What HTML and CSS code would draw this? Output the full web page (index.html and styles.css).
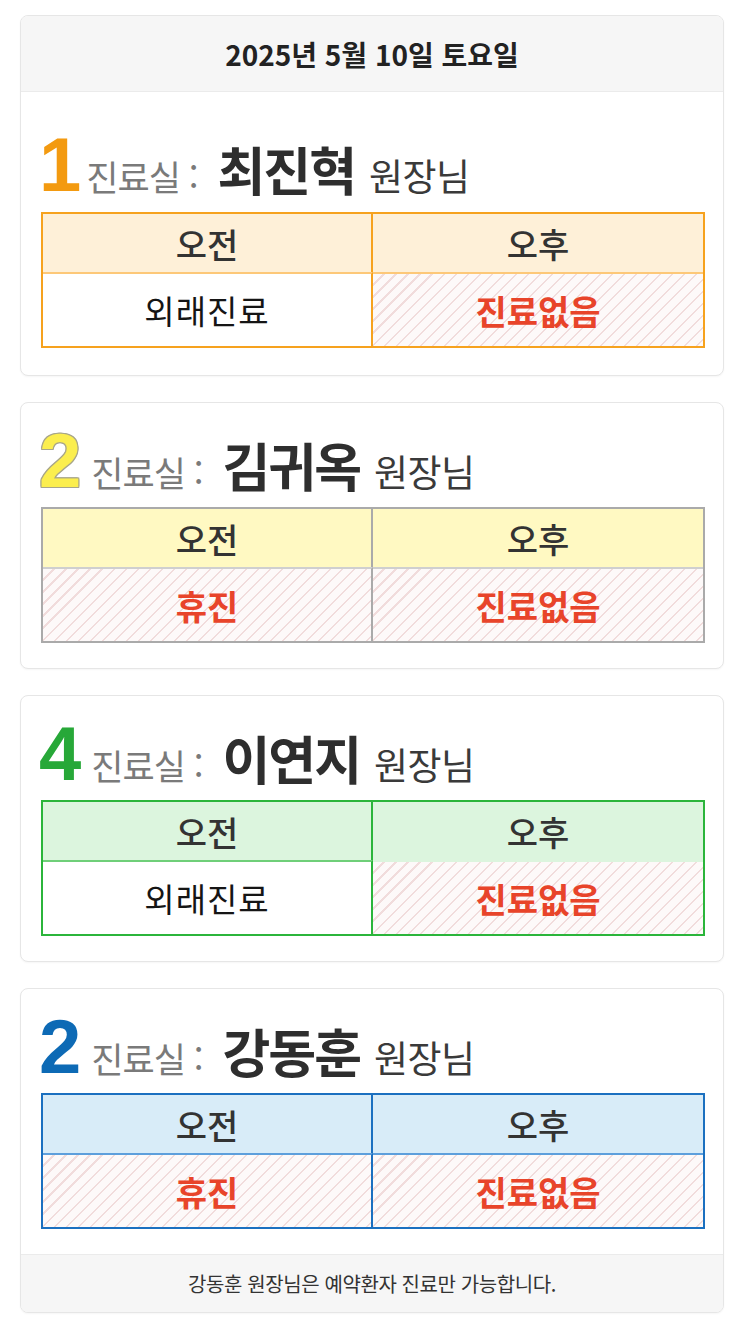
FILE: index.html
```html
<!DOCTYPE html>
<html lang="ko">
<head>
<meta charset="utf-8">
<title>진료 일정</title>
<link rel="stylesheet" href="styles.css">
</head>
<body>
<main class="page">
  <section class="card card--first">
    <header class="card-head">2025년 5월 10일 토요일</header>
    <div class="title title--first">
      <span class="num num--orange">1</span>
      <span class="room">진료실 :</span>
      <span class="name">최진혁</span>
      <span class="rank">원장님</span>
    </div>
    <div class="sched sched--orange">
      <div class="th th--left">오전</div>
      <div class="th">오후</div>
      <div class="td td--left">외래진료</div>
      <div class="td td--off">진료없음</div>
    </div>
  </section>

  <section class="card">
    <div class="title">
      <span class="num num--yellow">2</span>
      <span class="room">진료실 :</span>
      <span class="name">김귀옥</span>
      <span class="rank">원장님</span>
    </div>
    <div class="sched sched--gray">
      <div class="th th--left">오전</div>
      <div class="th">오후</div>
      <div class="td td--left td--off">휴진</div>
      <div class="td td--off">진료없음</div>
    </div>
  </section>

  <section class="card">
    <div class="title">
      <span class="num num--green">4</span>
      <span class="room">진료실 :</span>
      <span class="name">이연지</span>
      <span class="rank">원장님</span>
    </div>
    <div class="sched sched--green">
      <div class="th th--left">오전</div>
      <div class="th">오후</div>
      <div class="td td--left">외래진료</div>
      <div class="td td--off td--noline">진료없음</div>
    </div>
  </section>

  <section class="card">
    <div class="title">
      <span class="num num--blue">2</span>
      <span class="room">진료실 :</span>
      <span class="name">강동훈</span>
      <span class="rank">원장님</span>
    </div>
    <div class="sched sched--blue">
      <div class="th th--left">오전</div>
      <div class="th">오후</div>
      <div class="td td--left td--off">휴진</div>
      <div class="td td--off">진료없음</div>
    </div>
    <footer class="card-foot">강동훈 원장님은 예약환자 진료만 가능합니다.</footer>
  </section>
</main>
</body>
</html>
```

FILE: styles.css
```css
* { box-sizing: border-box; }

body {
  margin: 0;
  background: #ffffff;
  font-family: "Noto Sans CJK KR", "Noto Sans", sans-serif;
  color: #333;
}

.page {
  padding: 15px 20px 8px;
  display: flex;
  flex-direction: column;
  gap: 26px;
}

.card {
  border: 1px solid #e6e6e6;
  border-radius: 8px;
  background: #fff;
  box-shadow: 0 1px 2px rgba(0, 0, 0, 0.04);
  padding-bottom: 25px;
  overflow: hidden;
}

.card--first { padding-bottom: 27px; }

.card-head {
  height: 76px;
  background: #f6f6f6;
  border-bottom: 1px solid #ebebeb;
  display: flex;
  align-items: center;
  justify-content: center;
  font-size: 28px;
  font-weight: 700;
  color: #222;
  letter-spacing: 0;
}

.title {
  display: flex;
  align-items: baseline;
  padding: 20px 20px 0 18px;
  margin-bottom: 8px;
  line-height: 1;
}

.title--first { padding-top: 35px; margin-bottom: 9px; }

.num {
  font-family: "Liberation Sans", Arial, sans-serif;
  font-weight: 700;
  font-size: 76px;
  line-height: 1;
  margin-right: 12px;
  letter-spacing: -2px;
}

.num--orange { color: #f39a10; margin-right: 7px; }
.num--yellow {
  color: #fbee4e;
  text-shadow: 1px 0 0 #a8a68a, -1px 0 0 #a8a68a, 0 1px 0 #a8a68a, 0 -1px 0 #a8a68a,
    1px 1px 0 #a8a68a, -1px -1px 0 #a8a68a, 1px -1px 0 #a8a68a, -1px 1px 0 #a8a68a;
}
.num--green { color: #27a838; }
.num--blue { color: #0d6ab5; }

.room {
  font-size: 35px;
  color: #7a7a7a;
  margin-right: 20px;
  letter-spacing: -1px;
}

.name {
  font-size: 52px;
  font-weight: 700;
  color: #2e2e2e;
  margin-right: 14px;
  letter-spacing: -2px;
}

.rank {
  font-size: 37px;
  color: #3a3a3a;
  letter-spacing: -0.5px;
}

.sched {
  margin: 0 18px 0 20px;
  display: grid;
  grid-template-columns: 1fr 1fr;
  border: 2px solid var(--line);
}

.sched--orange { --line: #f6a21e; --soft: #fdc878; --head: #fef0d8; }
.sched--gray { --line: #aaaaaa; --soft: #cfcfcf; --head: #fff9c2; }
.sched--green { --line: #2bb53b; --soft: #6fcf79; --head: #dcf5de; }
.sched--blue { --line: #1b70c0; --soft: #5d9fdc; --head: #d8ecf8; }

.th {
  height: 58px;
  background: var(--head);
  display: flex;
  align-items: center;
  justify-content: center;
  font-size: 34px;
  font-weight: 500;
  color: #333;
}

.td {
  height: 74px;
  border-top: 2px solid var(--soft);
  display: flex;
  align-items: center;
  justify-content: center;
  font-size: 33px;
  color: #151515;
  letter-spacing: 1px;
}

.th--left, .td--left { border-right: 2px solid var(--line); }

.td--off {
  font-size: 34px;
  color: #e8442a;
  font-weight: 700;
  letter-spacing: 0;
  background: repeating-linear-gradient(135deg, #fdf9f9 0 7px, #f1dcdc 7px 8.5px);
}

.td--noline { border-top-color: var(--head); }

.card-foot {
  margin-top: 25px;
  margin-bottom: -25px;
  height: 58px;
  background: #f6f6f6;
  border-top: 1px solid #ebebeb;
  display: flex;
  align-items: center;
  justify-content: center;
  font-size: 20px;
  color: #333;
  letter-spacing: -0.4px;
}
```
